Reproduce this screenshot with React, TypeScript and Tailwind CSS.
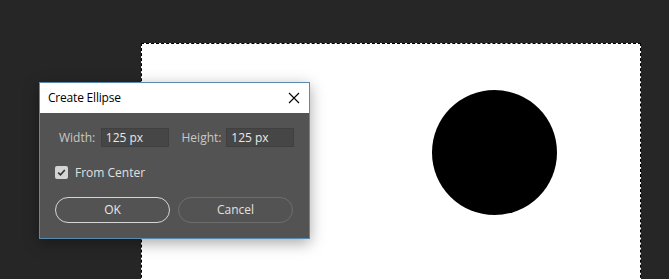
import React from "react";

export default function App() {
  return (
    <div className="relative h-[279px] w-[669px] overflow-hidden bg-[#262626] pl-[141px] pt-[43px] font-['Open_Sans',sans-serif]">
      <div className="h-[260px] w-[500px] border border-dashed border-black bg-white pl-[290px] pt-[46px]">
        <div className="h-[125px] w-[125px] rounded-full bg-black" />
      </div>

      <div className="absolute left-[39px] top-[82px] w-[271px] border border-[#5a8aae] bg-[#535353] shadow-[0_4px_14px_rgba(0,0,0,0.35)]">
        <div className="flex h-[30px] items-center justify-between bg-white pl-[8px] pr-[9px]">
          <span className="text-[12px] tracking-[-0.2px] text-black">Create Ellipse</span>
          <svg width="12" height="12" viewBox="0 0 12 12" className="text-black">
            <path d="M1 1 L11 11 M11 1 L1 11" stroke="currentColor" strokeWidth="1.1" fill="none" />
          </svg>
        </div>
        <div className="pl-[19px] pr-[15px] pb-[15px] pt-[15px] text-[12px] leading-none">
          <div className="flex h-[19px] items-center">
            <span className="w-[42px] text-[#c8c8c8]">Width:</span>
            <div className="flex h-[19px] w-[68px] items-center border border-[#404040] bg-[#464646] px-[4px] text-[#e8e8e8]">125 px</div>
            <span className="ml-[13px] w-[45px] text-[#c8c8c8]">Height:</span>
            <div className="flex h-[19px] w-[68px] items-center border border-[#404040] bg-[#464646] px-[4px] text-[#e8e8e8]">125 px</div>
          </div>
          <div className="mt-[19px] flex h-[13px] items-center">
            <div className="-ml-[4px] flex h-[13px] w-[13px] items-center justify-center rounded-[2px] bg-[#d4d4d4]">
              <svg width="9" height="9" viewBox="0 0 9 9">
                <path d="M1.2 4.6 L3.5 6.9 L7.8 2" stroke="#333" strokeWidth="1.6" fill="none" />
              </svg>
            </div>
            <span className="ml-[7px] text-[#e0e0e0]">From Center</span>
          </div>
          <div className="-ml-[4px] mt-[18px] flex gap-[8px]">
            <button className="flex h-[26px] w-[115px] items-center justify-center rounded-full border border-[#d6d6d6] text-[12px] text-[#e8e8e8]">OK</button>
            <button className="flex h-[26px] w-[115px] items-center justify-center rounded-full border border-[#6e6e6e] text-[12px] text-[#e0e0e0]">Cancel</button>
          </div>
        </div>
      </div>
    </div>
  );
}
